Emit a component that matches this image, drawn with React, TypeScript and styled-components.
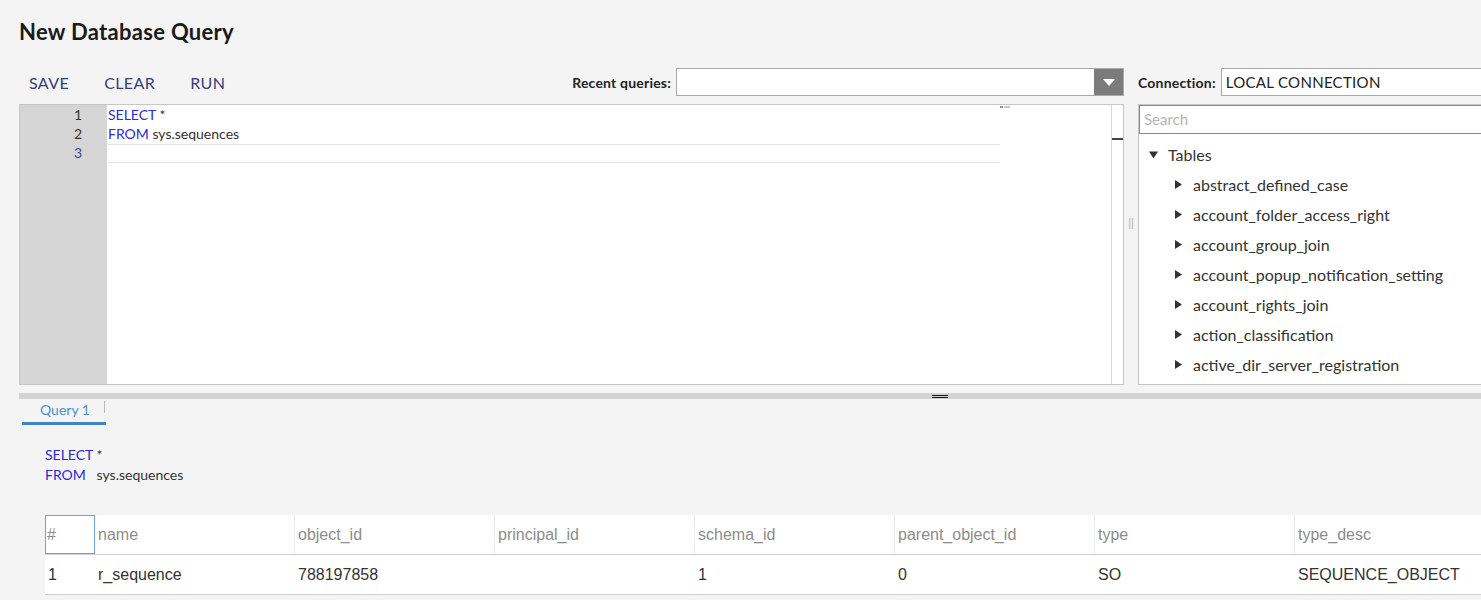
import React from 'react';
import styled, { createGlobalStyle } from 'styled-components';

const GlobalStyle = createGlobalStyle`
	html, body {
		margin: 0;
		padding: 0;
		background: #f4f4f4;
		overflow: hidden;
	}
	body {
		font-family: Lato, 'Noto Sans', sans-serif;
		color: #222;
	}
`;

const Page = styled.div`
	width: 1520px;
	padding-left: 19px;
`;

const Title = styled.h1`
	margin: 0;
	padding-top: 18px;
	height: 45px;
	font-size: 22px;
	font-weight: 700;
	color: #1a1a1a;
	letter-spacing: 0.3px;
`;

const Columns = styled.div`
	display: grid;
	grid-template-columns: 1105px 14px 380px;
`;

const TopBar = styled.div`
	display: flex;
	align-items: center;
	justify-content: space-between;
	height: 28px;
	margin-top: 5px;
	margin-bottom: 8px;
`;

const ActionGroup = styled.div`
	display: flex;
	align-items: center;
`;

const ActionButton = styled.button`
	background: none;
	border: none;
	padding: 0 10px;
	margin-right: 15px;
	font-family: Lato, sans-serif;
	font-size: 16px;
	color: #34407a;
	letter-spacing: 0.4px;
	cursor: pointer;
`;

const FieldGroup = styled.div`
	display: flex;
	align-items: center;
	gap: 5px;
`;

const FieldLabel = styled.label`
	font-size: 14px;
	font-weight: 700;
	color: #222;
	letter-spacing: 0.2px;
`;

const SelectBox = styled.div<{ width: number }>`
	display: flex;
	width: ${p => p.width}px;
	height: 28px;
	box-sizing: border-box;
	background: #fff;
	border: 1px solid #a9a9a9;
	align-items: stretch;
	font-size: 15px;
	color: #222;
`;

const SelectValue = styled.div`
	flex: 1;
	padding-left: 4px;
	display: flex;
	align-items: center;
	letter-spacing: 0.3px;
`;

const SelectArrow = styled.div`
	width: 29px;
	background: #7b7b7b;
	display: flex;
	align-items: center;
	justify-content: center;
`;

const Editor = styled.div`
	display: flex;
	height: 281px;
	box-sizing: border-box;
	border: 1px solid #c6c6c6;
	background: #fff;
`;

const Gutter = styled.div`
	width: 87px;
	background: #d5d5d5;
	padding-top: 1px;
`;

const LineNumber = styled.div<{ active?: boolean }>`
	height: 19px;
	line-height: 18px;
	width: 62px;
	text-align: right;
	font-size: 14px;
	color: ${p => (p.active ? '#3a4a8a' : '#333')};
`;

const CodeArea = styled.div`
	flex: 1;
	position: relative;
	padding-top: 1px;
	padding-left: 1px;
`;

const CodeLine = styled.div<{ active?: boolean }>`
	height: 19px;
	width: 892px;
	box-sizing: border-box;
	font-size: 14px;
	color: #333;
	white-space: pre;
	border-top: 1px solid ${p => (p.active ? '#e6e6e6' : 'transparent')};
	border-bottom: 1px solid ${p => (p.active ? '#e6e6e6' : 'transparent')};
	line-height: 16px;
`;

const Keyword = styled.span`
	color: #2a2ae0;
`;

const Minimap = styled.div`
	position: absolute;
	left: 893px;
	top: 1px;
	display: flex;
	gap: 1px;
	align-items: flex-start;
`;

const MiniBlock = styled.div<{ w: number; c: string }>`
	width: ${p => p.w}px;
	height: 2px;
	background: ${p => p.c};
`;

const ScrollTrack = styled.div`
	width: 11px;
	border-left: 1px solid #d6d6d6;
	position: relative;
`;

const ScrollMark = styled.div`
	position: absolute;
	top: 33px;
	left: 0;
	right: 0;
	height: 2px;
	background: #444;
`;

const VSplitter = styled.div`
	display: flex;
	align-items: center;
	justify-content: center;
	color: #aaa;
	font-size: 11px;
	padding-bottom: 44px;
`;

const SidePanel = styled.div`
	height: 281px;
	box-sizing: border-box;
	border: 1px solid #c6c6c6;
	background: #fff;
	display: flex;
	flex-direction: column;
`;

const SearchInput = styled.div`
	height: 29px;
	box-sizing: border-box;
	border: 1px solid #8a8a8a;
	display: flex;
	align-items: center;
	padding-left: 4px;
	padding-bottom: 2px;
	font-size: 15px;
	color: #b4b4b4;
`;

const Tree = styled.div`
	padding-top: 5px;
`;

const TreeRow = styled.div<{ depth: number }>`
	height: 30px;
	display: flex;
	align-items: center;
	padding-left: ${p => 10 + p.depth * 25}px;
	font-size: 16px;
	color: #333;
`;

const Caret = styled.span`
	display: inline-flex;
	width: 19px;
`;

const HSplitter = styled.div`
	margin-top: 8px;
	height: 6px;
	background: #d4d4d4;
	display: flex;
	align-items: center;
	padding-left: 913px;
`;

const Grip = styled.div`
	width: 16px;
	height: 3px;
	border-top: 1px solid #111;
	border-bottom: 1px solid #111;
	box-sizing: border-box;
`;

const TabBar = styled.div`
	display: flex;
	align-items: flex-start;
	padding-left: 3px;
	height: 26px;
`;

const Tab = styled.div<{ selected?: boolean }>`
	width: 84px;
	box-sizing: border-box;
	padding-left: 18px;
	padding-top: 2px;
	height: 26px;
	font-size: 14px;
	color: #4d8fd4;
	border-bottom: 3px solid ${p => (p.selected ? '#3e83cc' : 'transparent')};
	position: relative;
	&::after {
		content: '';
		position: absolute;
		right: 1px;
		top: 2px;
		height: 12px;
		border-right: 1px solid #bbb;
	}
`;

const QueryText = styled.div`
	padding: 20px 0 0 26px;
	font-size: 14px;
	line-height: 20px;
	color: #333;
	height: 64px;
	white-space: pre;
`;

const ResultTable = styled.div`
	margin-left: 26px;
	margin-top: 6px;
	background: #fff;
	font-family: 'Liberation Sans', Arial, sans-serif;
	width: 1500px;
`;

const Row = styled.div<{ header?: boolean }>`
	display: grid;
	grid-template-columns: 50px repeat(7, 200px);
	height: 40px;
	box-sizing: border-box;
	border-bottom: 1px solid #d0d0d0;
	font-size: 16px;
	color: ${p => (p.header ? '#8c8c8c' : '#333')};
`;

const Cell = styled.div<{ header?: boolean; focused?: boolean }>`
	display: flex;
	align-items: center;
	box-sizing: border-box;
	border-right: 1px solid ${p => (p.header ? '#eeeeee' : 'transparent')};
	border: ${p => (p.focused ? '1px solid #6aa4d8' : undefined)};
	padding-left: ${p => (p.focused ? '1px' : '3px')};
`;

const tables = [
	'abstract_defined_case',
	'account_folder_access_right',
	'account_group_join',
	'account_popup_notification_setting',
	'account_rights_join',
	'action_classification',
	'active_dir_server_registration'
];

const columns = ['#', 'name', 'object_id', 'principal_id', 'schema_id', 'parent_object_id', 'type', 'type_desc'];
const rowData = ['1', 'r_sequence', '788197858', '', '1', '0', 'SO', 'SEQUENCE_OBJECT'];

const Triangle = ({ down }: { down?: boolean }) => (
	<svg width="9" height="9" viewBox="0 0 9 9">
		{down ? <path d="M0 1.5 L9 1.5 L4.5 8.5 Z" fill="#333" /> : <path d="M1 0 L8 4.5 L1 9 Z" fill="#333" />}
	</svg>
);

export default function App() {
	return (
		<Page>
			<GlobalStyle />
			<Title>New Database Query</Title>
			<Columns>
				<TopBar>
					<ActionGroup>
						<ActionButton>SAVE</ActionButton>
						<ActionButton>CLEAR</ActionButton>
						<ActionButton>RUN</ActionButton>
					</ActionGroup>
					<FieldGroup>
						<FieldLabel>Recent queries:</FieldLabel>
						<SelectBox width={448}>
							<SelectValue />
							<SelectArrow>
								<svg width="12" height="7" viewBox="0 0 12 7">
									<path d="M0 0 L12 0 L6 7 Z" fill="#fff" />
								</svg>
							</SelectArrow>
						</SelectBox>
					</FieldGroup>
				</TopBar>
				<div />
				<TopBar>
					<FieldGroup>
						<FieldLabel>Connection:</FieldLabel>
						<SelectBox width={300}>
							<SelectValue>LOCAL CONNECTION</SelectValue>
						</SelectBox>
					</FieldGroup>
				</TopBar>

				<Editor>
					<Gutter>
						<LineNumber>1</LineNumber>
						<LineNumber>2</LineNumber>
						<LineNumber active>3</LineNumber>
					</Gutter>
					<CodeArea>
						<CodeLine>
							<Keyword>SELECT</Keyword> *
						</CodeLine>
						<CodeLine>
							<Keyword>FROM</Keyword> sys.sequences
						</CodeLine>
						<CodeLine active />
						<Minimap>
							<MiniBlock w={3} c="#8a8af0" />
							<MiniBlock w={6} c="#c8c8c8" />
						</Minimap>
					</CodeArea>
					<ScrollTrack>
						<ScrollMark />
					</ScrollTrack>
				</Editor>
				<VSplitter>||</VSplitter>
				<SidePanel>
					<SearchInput>Search</SearchInput>
					<Tree>
						<TreeRow depth={0}>
							<Caret>
								<Triangle down />
							</Caret>
							Tables
						</TreeRow>
						{tables.map(t => (
							<TreeRow depth={1} key={t}>
								<Caret>
									<Triangle />
								</Caret>
								{t}
							</TreeRow>
						))}
					</Tree>
				</SidePanel>
			</Columns>

			<HSplitter>
				<Grip />
			</HSplitter>
			<TabBar>
				<Tab selected>Query 1</Tab>
			</TabBar>
			<QueryText>
				<div>
					<Keyword>SELECT</Keyword> *
				</div>
				<div>
					<Keyword>FROM</Keyword>
					{'   sys.sequences'}
				</div>
			</QueryText>
			<ResultTable>
				<Row header>
					{columns.map((c, i) => (
						<Cell header focused={i === 0} key={c}>
							{c}
						</Cell>
					))}
				</Row>
				<Row>
					{rowData.map((v, i) => (
						<Cell key={i}>{v}</Cell>
					))}
				</Row>
			</ResultTable>
		</Page>
	);
}
